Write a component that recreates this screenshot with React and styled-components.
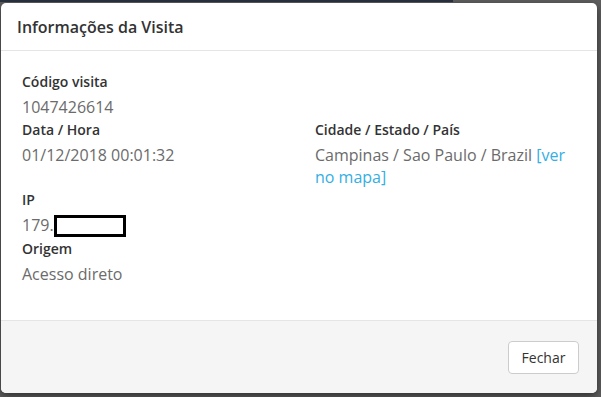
import React from "react";
import styled, { createGlobalStyle } from "styled-components";

const Global = createGlobalStyle`
  html, body { margin: 0; padding: 0; }
  body { font-family: "Open Sans", "Liberation Sans", sans-serif; background: #5e5e5e; overflow: hidden; }
`;

const Backdrop = styled.div`
  width: 601px;
  height: 397px;
  background: #5e5e5e;
  display: flex;
  flex-direction: column;
`;

const Strip = styled.div`
  width: 453px;
  height: 2px;
  background: #2b3140;
  flex: none;
`;

const Modal = styled.div`
  margin: 1px 0 0 1px;
  width: 596px;
  height: 390px;
  background: #fff;
  border-radius: 5px;
  box-shadow: 0 3px 9px rgba(0, 0, 0, 0.5);
  display: flex;
  flex-direction: column;
  overflow: hidden;
`;

const Header = styled.div`
  height: 47px;
  border-bottom: 1px solid #e5e5e5;
  display: flex;
  align-items: center;
  padding: 0 16px;
  flex: none;
`;

const Title = styled.h4`
  margin: 0;
  font-size: 16px;
  font-weight: 600;
  color: #333;
`;

const Body = styled.div`
  flex: 1;
  padding: 21px 21px 0 21px;
`;

const Grid = styled.div`
  display: grid;
  grid-template-columns: 261px 261px;
  column-gap: 32px;
`;

const Field = styled.div`
  grid-column: ${(p) => p.$col || 1};
`;

const Label = styled.div`
  font-size: 14px;
  font-weight: 600;
  color: #333;
  line-height: 20px;
  margin-bottom: 4px;
`;

const Value = styled.div`
  font-size: 16px;
  color: #6b6b6b;
  line-height: 22px;
  margin-bottom: 2px;
`;

const Link = styled.a`
  color: #35aee3;
  text-decoration: none;
`;

const Masked = styled.span`
  display: inline-block;
  width: 72px;
  height: 22px;
  border: 3px solid #000;
  box-sizing: border-box;
  vertical-align: -6px;
`;

const Footer = styled.div`
  height: 72px;
  border-top: 1px solid #e5e5e5;
  background: #f5f5f5;
  display: flex;
  align-items: center;
  justify-content: flex-end;
  padding: 0 18px;
  flex: none;
`;

const Button = styled.button`
  width: 71px;
  height: 33px;
  background: #fff;
  border: 1px solid #ccc;
  border-radius: 4px;
  font-family: "Open Sans", "Liberation Sans", sans-serif;
  font-size: 14px;
  color: #333;
  padding: 0;
  margin-top: 1px;
`;

export default function App() {
  return (
    <>
      <Global />
      <Backdrop>
        <Strip />
        <Modal>
          <Header>
            <Title>Informações da Visita</Title>
          </Header>
          <Body>
            <Grid>
              <Field>
                <Label>Código visita</Label>
                <Value>1047426614</Value>
              </Field>
              <Field>
                <Label>Data / Hora</Label>
                <Value>01/12/2018 00:01:32</Value>
              </Field>
              <Field $col={2}>
                <Label>Cidade / Estado / País</Label>
                <Value>
                  Campinas / Sao Paulo / Brazil <Link href="#">[ver no mapa]</Link>
                </Value>
              </Field>
              <Field>
                <Label>IP</Label>
                <Value>
                  179.<Masked />
                </Value>
              </Field>
              <Field>
                <Label>Origem</Label>
                <Value>Acesso direto</Value>
              </Field>
            </Grid>
          </Body>
          <Footer>
            <Button>Fechar</Button>
          </Footer>
        </Modal>
      </Backdrop>
    </>
  );
}
